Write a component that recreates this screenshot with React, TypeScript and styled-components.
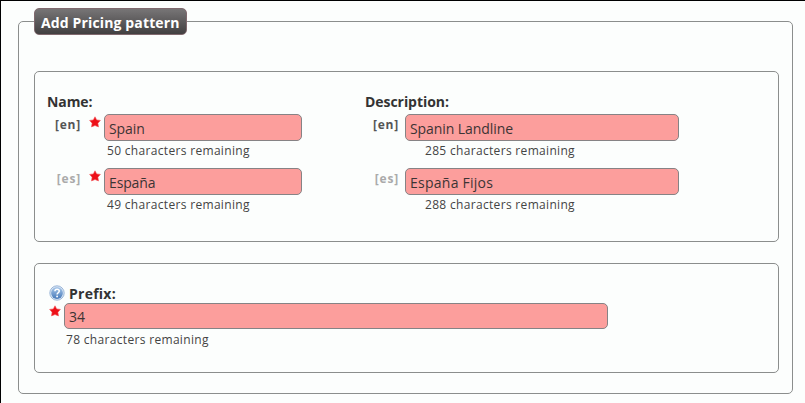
import React from 'react';
import styled, { createGlobalStyle } from 'styled-components';

const GlobalStyle = createGlobalStyle`
  * { box-sizing: border-box; }
  html, body { margin: 0; padding: 0; overflow: hidden; }
`;

const Page = styled.div`
  width: 805px;
  height: 403px;
  padding: 20px 11px 8px 17px;
  border-top: 1px solid #000;
  border-left: 1px solid #000;
  background: #fcfefd;
  color: #333;
  font-family: "Open Sans", "Noto Sans", sans-serif;
`;

const Outer = styled.section`
  position: relative;
  display: flex;
  flex-direction: column;
  gap: 21px;
  width: 775px;
  height: 373px;
  padding: 49px 13px 20px 15px;
  border: 1px solid #8b8e8d;
  border-radius: 5px;
`;

const Legend = styled.h1`
  position: absolute;
  top: -14px;
  left: 15px;
  width: 153px;
  height: 27px;
  margin: 0;
  padding-left: 6px;
  border: 1px solid #80696e;
  border-radius: 5px;
  background: linear-gradient(#777576, #424041);
  color: #fff;
  font-size: 14px;
  font-weight: 700;
  line-height: 27px;
  letter-spacing: 0.14px;
  white-space: nowrap;
`;

const Panel = styled.section<{ $h: number }>`
  flex: none;
  height: ${(p) => p.$h}px;
  padding: 22px 12px 0;
  border: 1px solid #8b8e8d;
  border-radius: 5px;
`;

const Columns = styled.div`
  display: grid;
  grid-template-columns: 318px 1fr;
`;

const Heading = styled.div<{ $ls?: number }>`
  height: 20px;
  font-size: 14px;
  font-weight: 700;
  line-height: 16px;
  letter-spacing: ${(p) => p.$ls ?? 0}px;
  white-space: nowrap;
`;

const Entry = styled.div<{ $cols: string }>`
  display: grid;
  grid-template-columns: ${(p) => p.$cols};
  height: 54px;
`;

const Lang = styled.span<{ $muted?: boolean }>`
  padding-right: 6px;
  color: ${(p) => (p.$muted ? '#aaa' : '#555')};
  font-size: 12px;
  font-weight: 700;
  line-height: 21px;
  letter-spacing: 0.8px;
  text-align: right;
`;

const StarIcon = styled.svg`
  display: block;
  width: 12px;
  height: 12px;
  margin: 2px 0 0 2px;
`;

const Input = styled.input<{ $w: number; $h?: number; $ls?: number }>`
  display: block;
  width: ${(p) => p.$w}px;
  height: ${(p) => p.$h ?? 27}px;
  margin: 0;
  padding: 1px 4px 0;
  border: 1px solid #868385;
  border-radius: 5px;
  outline: 0;
  background: #fc9e9c;
  color: #3c3434;
  font: 14px "Open Sans", "Noto Sans", sans-serif;
  letter-spacing: ${(p) => p.$ls ?? 0}px;
`;

const Remaining = styled.div<{ $x: number; $y?: number }>`
  padding: ${(p) => p.$y ?? 0}px 0 0 ${(p) => p.$x}px;
  color: #444;
  font-size: 12px;
  line-height: 19px;
  letter-spacing: 0.32px;
  white-space: nowrap;
`;

const PrefixHeading = styled.div`
  display: flex;
  gap: 4px;
  height: 17px;
  padding-left: 2px;
`;

const HelpIcon = styled.svg`
  width: 16px;
  height: 16px;
  margin-top: -1px;
`;

const Star = () => (
  <StarIcon viewBox="0 0 12 12">
    <path d="M6 .8 7.7 3.9 11.4 4.4 8.9 7.2 9.5 10.9 6 9.5 2.5 10.9 3.1 7.2.6 4.4 4.3 3.9Z" fill="#ed1018" stroke="#f4565b" strokeWidth=".6" strokeLinejoin="round" />
  </StarIcon>
);

const Help = () => (
  <HelpIcon viewBox="0 0 16 16">
    <defs>
      <linearGradient id="help" x1="0" y1="0" x2="0" y2="1">
        <stop offset="0" stopColor="#a9c8ea" />
        <stop offset="1" stopColor="#4779b9" />
      </linearGradient>
    </defs>
    <circle cx="8" cy="8" r="7.2" fill="#dce7f3" stroke="#86a7d0" strokeWidth=".8" />
    <circle cx="8" cy="8" r="5.9" fill="url(#help)" />
    <path d="M5.9 6.2Q6 4.2 8.1 4.2T10.3 6.1Q10.3 7.1 9.1 7.8 8.1 8.4 8.1 9.4" fill="none" stroke="#fff" strokeWidth="1.5" />
    <circle cx="8.1" cy="11.5" r=".95" fill="#fff" />
  </HelpIcon>
);

const NAME_COLS = '40px 17px 1fr';
const DESC_COLS = '40px 1fr';

export default function App() {
  return (
    <>
      <GlobalStyle />
      <Page>
        <Outer>
          <Legend>Add Pricing pattern</Legend>
          <Panel $h={171}>
            <Columns>
              <div>
                <Heading $ls={-0.1}>Name:</Heading>
                <Entry $cols={NAME_COLS}>
                  <Lang>[en]</Lang>
                  <Star />
                  <div>
                    <Input $w={198} $ls={-0.1} defaultValue="Spain" />
                    <Remaining $x={3}>50 characters remaining</Remaining>
                  </div>
                </Entry>
                <Entry $cols={NAME_COLS}>
                  <Lang $muted>[es]</Lang>
                  <Star />
                  <div>
                    <Input $w={198} $ls={-0.15} defaultValue="España" />
                    <Remaining $x={3}>49 characters remaining</Remaining>
                  </div>
                </Entry>
              </div>
              <div>
                <Heading $ls={-0.05}>Description:</Heading>
                <Entry $cols={DESC_COLS}>
                  <Lang>[en]</Lang>
                  <div>
                    <Input $w={274} $ls={-0.08} defaultValue="Spanin Landline" />
                    <Remaining $x={20}>285 characters remaining</Remaining>
                  </div>
                </Entry>
                <Entry $cols={DESC_COLS}>
                  <Lang $muted>[es]</Lang>
                  <div>
                    <Input $w={274} $ls={0.25} defaultValue="España Fijos" />
                    <Remaining $x={20}>288 characters remaining</Remaining>
                  </div>
                </Entry>
              </div>
            </Columns>
          </Panel>
          <Panel $h={110}>
            <PrefixHeading>
              <Help />
              <Heading $ls={0.25}>Prefix:</Heading>
            </PrefixHeading>
            <Entry $cols="17px 1fr">
              <Star />
              <div>
                <Input $w={544} $h={26} defaultValue="34" />
                <Remaining $x={2} $y={1}>78 characters remaining</Remaining>
              </div>
            </Entry>
          </Panel>
        </Outer>
      </Page>
    </>
  );
}
